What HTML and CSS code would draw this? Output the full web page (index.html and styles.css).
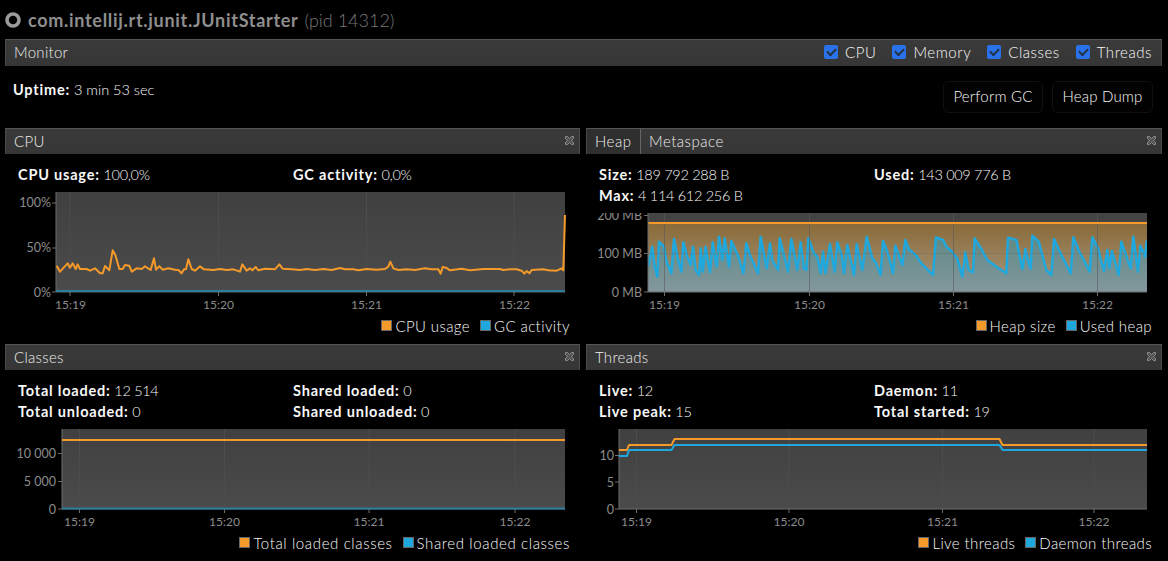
FILE: index.html
```html
<!DOCTYPE html>
<html lang="en">
<head>
  <meta charset="UTF-8">
  <title>com.intellij.rt.junit.JUnitStarter</title>
  <meta name="viewport" content="width=device-width, initial-scale=1.0">
  <link rel="stylesheet" href="styles.css">
</head>
<body>
  <h1 class="app-title">
    <svg class="app-icon" width="16" height="16" viewBox="0 0 16 16"><circle cx="8" cy="8" r="6" /></svg>
    <b>com.intellij.rt.junit.JUnitStarter</b> <span>(pid 14312)</span>
  </h1>

  <div class="bar bar-monitor">
    <span class="bar-title">Monitor</span>
    <div class="toggles">
      <label class="toggle"><i class="check"></i>CPU</label>
      <label class="toggle"><i class="check"></i>Memory</label>
      <label class="toggle"><i class="check"></i>Classes</label>
      <label class="toggle"><i class="check"></i>Threads</label>
    </div>
  </div>
  <div class="monitor-body">
    <div class="uptime"><b>Uptime:</b> 3 min 53 sec</div>
    <div class="actions">
      <button class="btn btn-gc">Perform GC</button>
      <button class="btn btn-dump">Heap Dump</button>
    </div>
  </div>

  <div class="grid">
    <!-- CPU -->
    <section class="panel">
      <div class="bar">
        <span class="bar-title">CPU</span>
        <svg class="close" width="9" height="9" viewBox="0 0 9 9"><path d="M.5.5h2l2 2 2-2h2v2l-2 2 2 2v2h-2l-2-2-2 2h-2v-2l2-2-2-2z" /></svg>
      </div>
      <div class="stats">
        <div><b>CPU usage:</b> 100,0%</div>
        <div><b>GC activity:</b> 0,0%</div>
      </div>
      <svg class="chart" width="574" height="128" viewBox="5 188 574 128">
        <defs>
          <linearGradient id="plotFill" x1="0" y1="0" x2="0" y2="1">
            <stop offset="0" stop-color="#404040" />
            <stop offset="1" stop-color="#4b4b4b" />
          </linearGradient>
        </defs>
        <rect fill="url(#plotFill)" x="56" y="192" width="509" height="100" />
        <path class="grid-line" d="M70 192v100M218.500 192v100M366.500 192v100M514 192v100" />
        <path class="axis" d="M56 192v100h509M52 203h4M52 248h4M52 292h4M70 292v4M218.500 292v4M366.500 292v4M514 292v4" />
        <path class="line-blue thin" d="M56 291h509" />
        <g transform="translate(0 125) scale(.33333)">
          <polyline class="line-orange" points="170,422 180,440 203,415 210,428 218,415 227,432 233,418 240,432 260,432 270,437 285,430 300,445 308,445 315,423 328,436 338,376 346,390 358,432 368,432 375,420 388,422 395,440 410,430 425,432 435,424 452,435 462,400 468,434 478,424 488,434 505,430 525,434 535,435 545,445 552,433 558,433 565,403 575,432 585,437 600,424 612,433 640,435 660,432 680,435 700,433 720,440 727,418 740,437 750,430 757,436 767,426 775,436 795,431 825,433 838,418 848,431 875,433 900,435 920,432 945,435 970,432 995,435 1020,429 1035,433 1060,433 1075,436 1100,432 1130,434 1155,432 1165,425 1171,410 1180,430 1195,435 1220,433 1245,435 1275,430 1295,433 1315,433 1322,446 1328,426 1338,428 1350,436 1385,431 1410,436 1450,432 1500,432 1510,435 1530,433 1550,433 1565,437 1573,446 1580,438 1588,445 1595,435 1630,433 1645,436 1670,437 1685,430 1690,436 1695,270" />
        </g>
        <g class="tick-y">
          <text x="51" y="207">100%</text>
          <text x="51" y="252">50%</text>
          <text x="51" y="297">0%</text>
        </g>
        <g class="tick-x">
          <text x="70.500" y="309">15:19</text>
          <text x="218.500" y="309">15:20</text>
          <text x="366.500" y="309">15:21</text>
          <text x="514.500" y="309">15:22</text>
        </g>
      </svg>
      <div class="legend">
        <span class="key"><i class="swatch orange"></i>CPU usage</span>
        <span class="key"><i class="swatch blue"></i>GC activity</span>
      </div>
    </section>

    <!-- Memory -->
    <section class="panel">
      <div class="bar">
        <div class="tabs">
          <span class="tab active">Heap</span>
          <span class="tab">Metaspace</span>
        </div>
        <svg class="close" width="9" height="9" viewBox="0 0 9 9"><path d="M.5.5h2l2 2 2-2h2v2l-2 2 2 2v2h-2l-2-2-2 2h-2v-2l2-2-2-2z" /></svg>
      </div>
      <div class="stats">
        <div><b>Size:</b> 189 792 288 B</div>
        <div><b>Used:</b> 143 009 776 B</div>
        <div><b>Max:</b> 4 114 612 256 B</div>
      </div>
      <svg class="chart" width="576" height="107" viewBox="586 209 576 107">
        <defs>
          <linearGradient id="heapFill" x1="0" y1="0" x2="0" y2="1">
            <stop offset="0" stop-color="#896a37" />
            <stop offset="1" stop-color="#a89a85" />
          </linearGradient>
          <linearGradient id="usedFill" x1="0" y1="0" x2="0" y2="1">
            <stop offset="0" stop-color="#1fa8dd" stop-opacity=".42" />
            <stop offset="1" stop-color="#4f93bd" stop-opacity=".42" />
          </linearGradient>
          <clipPath id="heapClip"><rect x="648" y="213" width="499" height="79" /></clipPath>
          <clipPath id="labelClip"><rect x="590" y="213" width="56" height="90" /></clipPath>
        </defs>
        <rect fill="#444" x="648" y="213" width="499" height="79" />
        <rect x="648" y="223" width="499" height="69" fill="url(#heapFill)" />
        <g clip-path="url(#heapClip)">
          <g transform="translate(584 125) scale(.33333)">
            <polyline class="line-blue used" fill="url(#usedFill)" points="188,505 188,420 193,420 205,365 212,425 220,455 225,350 240,365 248,410 262,445 270,342 280,395 292,440 298,352 310,395 320,420 327,365 335,435 345,450 350,370 356,440 365,365 378,442 386,352 398,425 405,335 415,405 422,340 435,425 442,348 465,400 478,445 487,355 500,395 522,445 530,335 548,430 558,355 565,405 582,435 587,340 600,390 612,440 622,342 640,435 650,352 660,430 667,435 673,340 690,385 700,395 710,445 717,380 724,445 738,358 752,440 760,352 773,390 780,445 790,360 810,450 818,358 835,435 848,335 865,400 875,412 890,450 897,348 912,385 927,445 934,362 955,420 964,345 974,372 997,392 1012,415 1047,450 1056,337 1077,345 1087,365 1102,378 1120,400 1135,455 1144,382 1154,435 1167,442 1172,340 1194,375 1210,405 1237,425 1267,445 1272,338 1297,345 1315,432 1324,372 1340,432 1345,332 1364,350 1387,435 1402,450 1410,342 1427,380 1460,445 1468,337 1484,375 1517,440 1525,337 1542,370 1560,438 1570,375 1576,430 1584,378 1604,450 1612,350 1640,430 1648,335 1662,440 1669,362 1684,395 1688,350 1695,350 1695,505" />
          </g>
        </g>
        <path class="heap-grid" d="M664.500 213v79M809.500 213v79M953.500 213v79M1097.500 213v79" />
        <path class="heap-dots" d="M648 253.500h499" />
        <path class="line-orange" d="M648 223h499" />
        <path class="axis" d="M648 213v79h499M644 215.500h4M644 253.500h4M644 292h4M664.500 292v4M809.500 292v4M953.500 292v4M1097.500 292v4" />
        <g class="tick-y" clip-path="url(#labelClip)">
          <text x="642" y="220">200 MB</text>
          <text x="642" y="258">100 MB</text>
          <text x="642" y="297">0 MB</text>
        </g>
        <g class="tick-x">
          <text x="664.500" y="309">15:19</text>
          <text x="809.500" y="309">15:20</text>
          <text x="953.500" y="309">15:21</text>
          <text x="1097.500" y="309">15:22</text>
        </g>
      </svg>
      <div class="legend">
        <span class="key"><i class="swatch orange"></i>Heap size</span>
        <span class="key"><i class="swatch blue"></i>Used heap</span>
      </div>
    </section>

    <!-- Classes -->
    <section class="panel">
      <div class="bar">
        <span class="bar-title">Classes</span>
        <svg class="close" width="9" height="9" viewBox="0 0 9 9"><path d="M.5.5h2l2 2 2-2h2v2l-2 2 2 2v2h-2l-2-2-2 2h-2v-2l2-2-2-2z" /></svg>
      </div>
      <div class="stats">
        <div><b>Total loaded:</b> 12 514</div>
        <div><b>Shared loaded:</b> 0</div>
        <div><b>Total unloaded:</b> 0</div>
        <div><b>Shared unloaded:</b> 0</div>
      </div>
      <svg class="chart" width="574" height="108" viewBox="5 425 574 108">
        <rect fill="url(#plotFill)" x="62" y="429" width="503" height="80" />
        <path class="grid-line" d="M79.500 429v80M224.500 429v80M369 429v80M515 429v80" />
        <path class="axis" d="M62 429v80h503M58 453.500h4M58 481.500h4M58 509h4M79.500 509v4M224.500 509v4M369 509v4M515 509v4" />
        <path class="line-orange" d="M62 440h503" />
        <path class="line-blue thin" d="M62 508.500h503" />
        <g class="tick-y">
          <text x="56" y="458">10 000</text>
          <text x="56" y="486">5 000</text>
          <text x="56" y="514">0</text>
        </g>
        <g class="tick-x">
          <text x="79.500" y="526">15:19</text>
          <text x="224.500" y="526">15:20</text>
          <text x="369" y="526">15:21</text>
          <text x="515" y="526">15:22</text>
        </g>
      </svg>
      <div class="legend legend-wide">
        <span class="key"><i class="swatch orange"></i>Total loaded classes</span>
        <span class="key"><i class="swatch blue"></i>Shared loaded classes</span>
      </div>
    </section>

    <!-- Threads -->
    <section class="panel">
      <div class="bar">
        <span class="bar-title">Threads</span>
        <svg class="close" width="9" height="9" viewBox="0 0 9 9"><path d="M.5.5h2l2 2 2-2h2v2l-2 2 2 2v2h-2l-2-2-2 2h-2v-2l2-2-2-2z" /></svg>
      </div>
      <div class="stats">
        <div><b>Live:</b> 12</div>
        <div><b>Daemon:</b> 11</div>
        <div><b>Live peak:</b> 15</div>
        <div><b>Total started:</b> 19</div>
      </div>
      <svg class="chart" width="576" height="108" viewBox="586 425 576 108">
        <rect fill="url(#plotFill)" x="619" y="429" width="528" height="80" />
        <path class="grid-line" d="M636.500 429v80M789 429v80M942.500 429v80M1094 429v80" />
        <path class="axis" d="M619 429v80h528M615 455.500h4M615 482h4M615 509h4M636.500 509v4M789 509v4M942.500 509v4M1094 509v4" />
        <polyline class="line-orange" points="619,450 627,450 629,445 671.500,445 674.500,439 999.500,439 1002.500,445 1147,445" />
        <polyline class="line-blue" points="619,456 627,456 629,450 671.500,450 674.500,445 999.500,445 1002.500,450 1147,450" />
        <g class="tick-y">
          <text x="614" y="460">10</text>
          <text x="614" y="487">5</text>
          <text x="614" y="514">0</text>
        </g>
        <g class="tick-x">
          <text x="636.500" y="526">15:19</text>
          <text x="789" y="526">15:20</text>
          <text x="942.500" y="526">15:21</text>
          <text x="1094" y="526">15:22</text>
        </g>
      </svg>
      <div class="legend">
        <span class="key"><i class="swatch orange"></i>Live threads</span>
        <span class="key"><i class="swatch blue"></i>Daemon threads</span>
      </div>
    </section>
  </div>
</body>
</html>
```

FILE: styles.css
```css
* {
  box-sizing: border-box;
}
body {
  margin: 0;
  padding: 0 6px 0 5px;
  background: #000;
  color: #f8f8f8;
  font-family: Lato, 'Noto Sans', sans-serif;
  font-size: 14.5px;
  font-weight: 300;
  height: 561px;
  overflow: hidden;
}
b {
  font-weight: 700;
  letter-spacing: .8px;
}
.app-title {
  margin: 0;
  height: 39px;
  display: flex;
  align-items: center;
  gap: 6px;
  font-size: 18px;
  font-weight: 300;
  color: #777;
}
.app-title b {
  color: #8f8f8f;
  letter-spacing: .7px;
}
.app-icon {
  margin-right: 1px;
}
.app-icon circle {
  fill: none;
  stroke: #9c9c9c;
  stroke-width: 3.6;
}

.bar {
  height: 26px;
  display: flex;
  align-items: center;
  justify-content: space-between;
  padding: 0 9px 0 8px;
  background: linear-gradient(#3a3a3a, #363636);
  border-top: 1px solid #565656;
  border-left: 1px solid #4a4a4a;
  border-right: 1px solid #4a4a4a;
}
.bar-monitor {
  height: 27px;
}
.bar-title {
  color: #eee;
  font-size: 15px;
  letter-spacing: .3px;
  padding-bottom: 2px;
}

.toggles {
  display: flex;
  gap: 16px;
}
.toggle {
  display: flex;
  align-items: center;
  gap: 7px;
  font-size: 15px;
  letter-spacing: .55px;
  padding-bottom: 2px;
}
.check {
  position: relative;
  width: 14px;
  height: 14px;
  border-radius: 2px;
  background: #2a72ea;
}
.check::after {
  content: "";
  position: absolute;
  left: 3px;
  top: 2.500px;
  width: 7px;
  height: 4px;
  border-left: 2px solid #23303f;
  border-bottom: 2px solid #23303f;
  transform: rotate(-45deg);
}

.monitor-body {
  height: 62px;
  display: flex;
  justify-content: space-between;
  padding: 0 9px 0 8px;
}
.uptime {
  margin-top: 13px;
  line-height: 21px;
}
.actions {
  display: flex;
  gap: 9px;
  margin-top: 15px;
}
.btn {
  height: 32px;
  background: #020202;
  border: 1px solid #101010;
  border-radius: 5px;
  color: #f8f8f8;
  font: inherit;
  font-size: 15px;
  letter-spacing: .2px;
  padding: 0 0 2px;
}
.btn-gc {
  width: 100px;
}
.btn-dump {
  width: 101px;
}

.grid {
  display: grid;
  grid-template-columns: 575px 576px;
  column-gap: 6px;
  row-gap: 7px;
}
.panel {
  min-width: 0;
}
.close {
  margin-right: -4px;
  margin-bottom: 2px;
}
.close path {
  fill: #555;
  stroke: #8d8d8d;
  stroke-width: 1;
}
.tabs {
  display: flex;
  align-self: stretch;
  margin-left: -8px;
}
.tab {
  display: flex;
  align-items: center;
  padding: 0 8px 2px;
  font-size: 15px;
  letter-spacing: .5px;
  color: #eee;
}
.tab.active {
  width: 54px;
  background: #2f2f2f;
  border-right: 1px solid #666;
}

.stats {
  display: grid;
  grid-template-columns: 275px 1fr;
  padding: 10px 8px 3px 13px;
  line-height: 21px;
  letter-spacing: -.3px;
}
.stats b {
  color: #f8f8f8;
}

.chart {
  display: block;
}
.grid-line {
  stroke: #4c4c4c;
  stroke-width: 1;
  fill: none;
}
.heap-grid {
  stroke: rgba(90, 90, 90, .6);
  stroke-width: 1;
  fill: none;
}
.heap-dots {
  stroke: #666;
  stroke-width: 1;
  stroke-dasharray: 1 2;
  fill: none;
}
.axis {
  stroke: #6d6d6d;
  stroke-width: 1;
  fill: none;
}
.line-orange,
.line-blue {
  stroke-width: 2;
  stroke-linejoin: round;
  vector-effect: non-scaling-stroke;
}
.line-orange {
  stroke: #f39a2b;
  fill: none;
}
.line-blue {
  stroke: #1fa8dd;
}
.used {
  stroke-width: 2.5;
}
polyline.line-blue:not([fill]) {
  fill: none;
}
.thin {
  stroke: #2b7d9c;
}
.tick-y text,
.tick-x text {
  fill: #8c8c8c;
  font-size: 12.5px;
  font-weight: 400;
}
.tick-x text {
  font-size: 12px;
  text-anchor: middle;
}
.tick-y text {
  text-anchor: end;
}

.legend {
  display: flex;
  justify-content: flex-end;
  align-items: center;
  gap: 10px;
  height: 21px;
  padding: 0 10px 2px 0;
  font-size: 15px;
  letter-spacing: .4px;
}
.legend-wide {
  letter-spacing: .62px;
}
.key {
  display: flex;
  align-items: center;
  gap: 3px;
}
.swatch {
  width: 11px;
  height: 11px;
  border: 1px solid #666;
}
.swatch.orange {
  background: #f39a2b;
}
.swatch.blue {
  background: #1fa8dd;
}
```
